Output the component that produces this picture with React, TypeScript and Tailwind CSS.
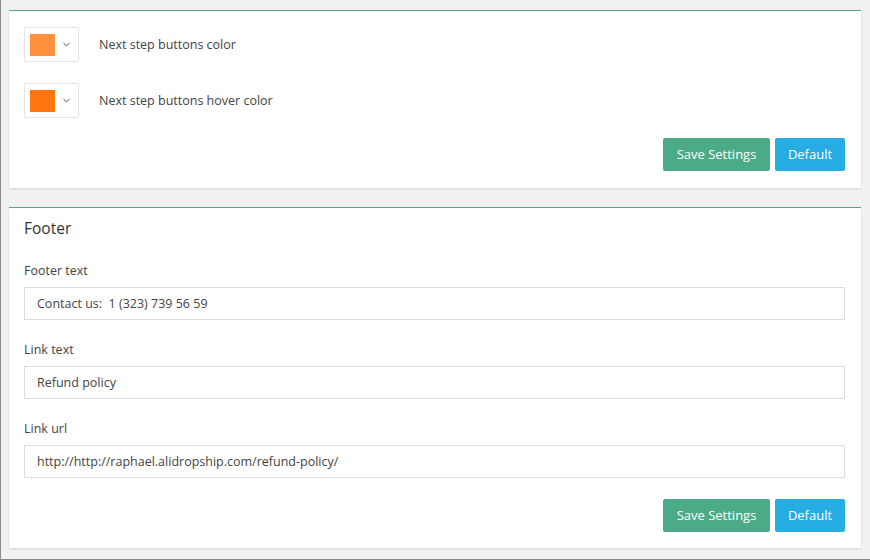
import { ChevronDown } from "lucide-react";

const COLOR_FIELDS = [
  { color: "#ff913f", label: "Next step buttons color" },
  { color: "#ff7510", label: "Next step buttons hover color" },
];

const FOOTER_FIELDS = [
  { label: "Footer text", value: "Contact us:  1 (323) 739 56 59" },
  { label: "Link text", value: "Refund policy" },
  { label: "Link url", value: "http://http://raphael.alidropship.com/refund-policy/" },
];

function Buttons() {
  return (
    <div className="flex justify-end gap-[5px]">
      <button className="h-[33px] w-[107px] rounded-[2px] bg-[#4bab87] text-[13px] text-white">
        Save Settings
      </button>
      <button className="h-[33px] w-[70px] rounded-[2px] bg-[#25ade4] text-[13px] text-white">
        Default
      </button>
    </div>
  );
}

export default function App() {
  return (
    <div
      className="h-[560px] w-[870px] overflow-hidden border-b border-l border-[#8a8a8a] bg-[#f1f1f1] pl-[8px] pr-[9px] pt-[10px] text-[#444]"
      style={{ fontFamily: '"Open Sans", "Liberation Sans", sans-serif' }}>
      <section className="border-t border-[#5aa692] bg-white pb-[17px] pl-[15px] pr-[16px] pt-[16px] shadow-[0_1px_2px_rgba(0,0,0,0.12)]">
        <div className="flex flex-col gap-[21px]">
          {COLOR_FIELDS.map((field) => (
            <div key={field.label} className="flex items-center">
              <div className="flex h-[35px] w-[55px] items-center rounded-[2px] border border-[#e4e4e4] pl-[5px]">
                <span
                  className="h-[22px] w-[25px]"
                  style={{ backgroundColor: field.color }}
                />
                <ChevronDown className="ml-[6px] h-[11px] w-[11px] text-[#888]" strokeWidth={2.2} />
              </div>
              <span className="ml-[20px] pt-[2px] text-[12.5px] text-[#444]">{field.label}</span>
            </div>
          ))}
        </div>
        <div className="mt-[20px]">
          <Buttons />
        </div>
      </section>

      <section className="mt-[19px] border-t border-[#5aa692] bg-white pb-[16px] pl-[15px] pr-[16px] pt-[9px] shadow-[0_1px_2px_rgba(0,0,0,0.12)]">
        <h2 className="text-[15.5px] leading-[22px] text-[#333]">Footer</h2>
        <div className="mt-[23px] flex flex-col gap-[21px]">
          {FOOTER_FIELDS.map((field) => (
            <div key={field.label}>
              <label className="block text-[12.5px] leading-[18px] text-[#444]">{field.label}</label>
              <input
                readOnly
                value={field.value}
                className="mt-[7px] block h-[33px] w-full border border-[#dcdcdc] px-[12px] text-[12.5px] text-[#444] outline-none"
              />
            </div>
          ))}
        </div>
        <div className="mt-[21px]">
          <Buttons />
        </div>
      </section>
    </div>
  );
}
